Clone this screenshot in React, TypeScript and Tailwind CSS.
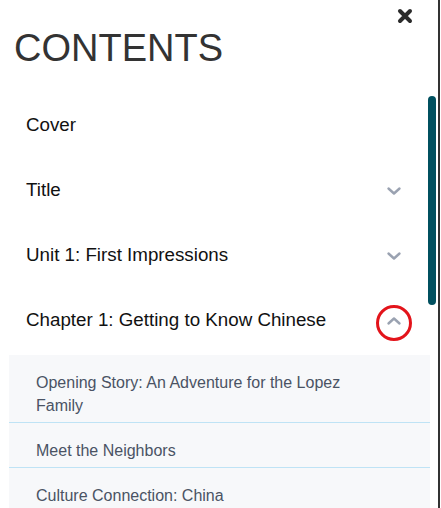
import React from "react";

function ChevronDown() {
  return (
    <svg width="16" height="10" viewBox="0 0 16 10" fill="none">
      <polyline points="2.5,2.5 8,7.5 13.5,2.5" stroke="#9aa2b1" strokeWidth="2.4" strokeLinecap="round" strokeLinejoin="round" />
    </svg>
  );
}

function ChevronUp() {
  return (
    <svg width="16" height="10" viewBox="0 0 16 10" fill="none">
      <polyline points="2.5,7.5 8,2.5 13.5,7.5" stroke="#9aa2b1" strokeWidth="2.4" strokeLinecap="round" strokeLinejoin="round" />
    </svg>
  );
}

const rows = [
  { label: "Cover", icon: null as null | "down" | "up" },
  { label: "Title", icon: "down" as const },
  { label: "Unit 1: First Impressions", icon: "down" as const },
  { label: "Chapter 1: Getting to Know Chinese", icon: "up" as const },
];

const subItems = [
  "Opening Story: An Adventure for the Lopez Family",
  "Meet the Neighbors",
  "Culture Connection: China",
];

export default function App() {
  return (
    <div className="w-[441px] h-[508px] bg-white overflow-hidden font-['Liberation_Sans',Arial,sans-serif]">
      <div className="w-[440px] h-[508px] border-r-2 border-[#333] relative overflow-hidden">
        <div className="flex justify-end pt-[8px] pr-[25px]">
          <button className="w-[16px] h-[16px]" aria-label="Close">
            <svg width="16" height="16" viewBox="0 0 16 16">
              <path d="M3 3 L13 13 M13 3 L3 13" stroke="#2b2b2b" strokeWidth="4" strokeLinecap="round" />
            </svg>
          </button>
        </div>
        <h1 className="pl-[14px] mt-[2px] text-[38px] leading-[44px] text-[#333]">CONTENTS</h1>
        <div className="mt-[23px]">
          {rows.map((r) => (
            <div key={r.label} className="h-[65px] flex items-center justify-between pl-[26px] pr-[26px]">
              <span className="text-[18.75px] text-[#111]">{r.label}</span>
              {r.icon && (
                <div className="relative w-[36px] h-[36px] flex items-center justify-center">
                  {r.icon === "down" ? <ChevronDown /> : <ChevronUp />}
                  {r.icon === "up" && (
                    <div className="absolute left-0 top-[2px] w-[36px] h-[36px] rounded-full border-[3px] border-[#e3141b]" />
                  )}
                </div>
              )}
            </div>
          ))}
        </div>
        <div className="mt-[2px] ml-[9px] w-[421px] bg-[#f7f8fa]">
          {subItems.map((s) => (
            <div key={s} className="pl-[27px] pr-[40px] pt-[16px] pb-[5px] border-b border-[#bfe3f5] text-[16px] leading-[23px] text-[#4a5364]">
              {s}
            </div>
          ))}
        </div>
        <div className="absolute left-[428px] top-[96px] w-[8px] h-[209px] rounded-full bg-[#00505f]" />
      </div>
    </div>
  );
}
